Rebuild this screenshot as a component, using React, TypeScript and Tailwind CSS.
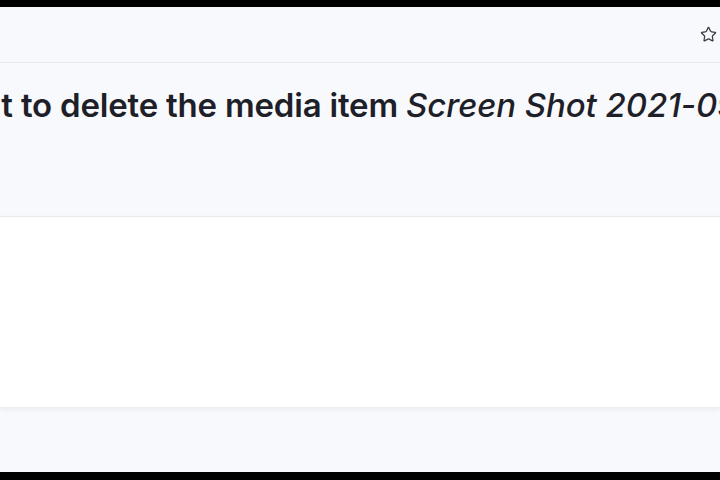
import React from 'react';
import { Star } from 'lucide-react';

export default function App() {
  return (
    <div className="w-[720px] h-[480px] overflow-hidden bg-black flex flex-col" style={{ fontFamily: 'Inter, "Noto Sans", sans-serif' }}>
      <div className="h-[7px] shrink-0 bg-black" />
      <div className="flex-1 flex flex-col bg-[#f8f9fc] overflow-hidden">
        {/* Top bar */}
        <div className="h-[56px] shrink-0 flex items-center justify-end pr-[3px] border-b border-[#e8e9ef]">
          <Star className="w-[17px] h-[17px] text-[#3b3d45]" strokeWidth={1.8} />
        </div>

        {/* Heading */}
        <div className="h-[154px] shrink-0 border-b border-[#ebecf1] overflow-hidden">
          <h1 className="mt-[18px] ml-[-339px] whitespace-nowrap text-[33px] font-semibold tracking-[-0.2px] text-[#1e1f29]">
            Are you sure you want to delete the media item <em className="font-medium tracking-[-0.1px]">Screen Shot 2021-09-14 at 10.32.11</em>?
          </h1>
        </div>

        {/* Card */}
        <div className="h-[190px] shrink-0 bg-white shadow-[0_2px_6px_rgba(20,25,60,0.07)]" />

        <div className="flex-1" />
      </div>
      <div className="h-[8px] shrink-0 bg-black" />
    </div>
  );
}
